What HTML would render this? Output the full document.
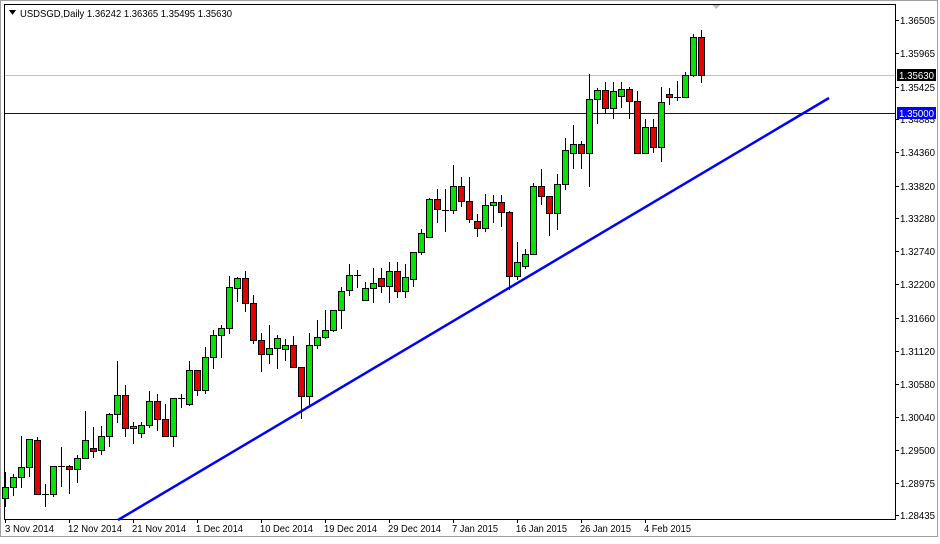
<!DOCTYPE html>
<html><head><meta charset="utf-8"><style>
html,body{margin:0;padding:0;background:#fff;}
body{width:940px;height:539px;overflow:hidden;}
svg text{font-family:"Liberation Sans",sans-serif;font-size:10.5px;fill:#000;}
</style></head><body>
<svg width="940" height="539" xmlns="http://www.w3.org/2000/svg" shape-rendering="crispEdges">
<rect x="0" y="0" width="940" height="539" fill="#fff"/>
<rect x="0.5" y="0.5" width="937" height="536" fill="none" stroke="#a0a0a0"/>
<rect x="4.5" y="4.5" width="891" height="515" fill="none" stroke="#000"/>
<polygon points="9,10 16,10 12.5,15" fill="#000"/>
<text x="20" y="17" textLength="212" lengthAdjust="spacingAndGlyphs">USDSGD,Daily  1.36242 1.36365 1.35495 1.35630</text>
<line x1="5" y1="75.5" x2="895" y2="75.5" stroke="#c0c0c0"/>
<line x1="5" y1="113.5" x2="895" y2="113.5" stroke="#0000c8"/>
<g stroke="#000" stroke-width="1">
<line x1="896" y1="20.5" x2="899" y2="20.5"/><line x1="896" y1="53.5" x2="899" y2="53.5"/>
<line x1="896" y1="87.5" x2="899" y2="87.5"/><line x1="896" y1="119.5" x2="899" y2="119.5"/>
<line x1="896" y1="152.5" x2="899" y2="152.5"/><line x1="896" y1="186.5" x2="899" y2="186.5"/>
<line x1="896" y1="218.5" x2="899" y2="218.5"/><line x1="896" y1="251.5" x2="899" y2="251.5"/>
<line x1="896" y1="284.5" x2="899" y2="284.5"/><line x1="896" y1="318.5" x2="899" y2="318.5"/>
<line x1="896" y1="351.5" x2="899" y2="351.5"/><line x1="896" y1="384.5" x2="899" y2="384.5"/>
<line x1="896" y1="417.5" x2="899" y2="417.5"/><line x1="896" y1="450.5" x2="899" y2="450.5"/>
<line x1="896" y1="483.5" x2="899" y2="483.5"/><line x1="896" y1="515.5" x2="899" y2="515.5"/>
<line x1="5.5" y1="520" x2="5.5" y2="523"/><line x1="69.5" y1="520" x2="69.5" y2="523"/>
<line x1="133.5" y1="520" x2="133.5" y2="523"/><line x1="197.5" y1="520" x2="197.5" y2="523"/>
<line x1="261.5" y1="520" x2="261.5" y2="523"/><line x1="325.5" y1="520" x2="325.5" y2="523"/>
<line x1="389.5" y1="520" x2="389.5" y2="523"/><line x1="453.5" y1="520" x2="453.5" y2="523"/>
<line x1="517.5" y1="520" x2="517.5" y2="523"/><line x1="581.5" y1="520" x2="581.5" y2="523"/>
<line x1="645.5" y1="520" x2="645.5" y2="523"/>
</g>
<g>
<text x="900" y="24" textLength="35" lengthAdjust="spacingAndGlyphs">1.36505</text>
<text x="900" y="57" textLength="35" lengthAdjust="spacingAndGlyphs">1.35965</text>
<text x="900" y="91" textLength="35" lengthAdjust="spacingAndGlyphs">1.35425</text>
<text x="900" y="123" textLength="35" lengthAdjust="spacingAndGlyphs">1.34885</text>
<text x="900" y="156" textLength="35" lengthAdjust="spacingAndGlyphs">1.34360</text>
<text x="900" y="190" textLength="35" lengthAdjust="spacingAndGlyphs">1.33820</text>
<text x="900" y="222" textLength="35" lengthAdjust="spacingAndGlyphs">1.33280</text>
<text x="900" y="255" textLength="35" lengthAdjust="spacingAndGlyphs">1.32740</text>
<text x="900" y="288" textLength="35" lengthAdjust="spacingAndGlyphs">1.32200</text>
<text x="900" y="322" textLength="35" lengthAdjust="spacingAndGlyphs">1.31660</text>
<text x="900" y="355" textLength="35" lengthAdjust="spacingAndGlyphs">1.31120</text>
<text x="900" y="388" textLength="35" lengthAdjust="spacingAndGlyphs">1.30580</text>
<text x="900" y="421" textLength="35" lengthAdjust="spacingAndGlyphs">1.30040</text>
<text x="900" y="454" textLength="35" lengthAdjust="spacingAndGlyphs">1.29500</text>
<text x="900" y="487" textLength="35" lengthAdjust="spacingAndGlyphs">1.28975</text>
<text x="900" y="519" textLength="35" lengthAdjust="spacingAndGlyphs">1.28435</text>
</g>
<rect x="897" y="69" width="39" height="12" fill="#000"/>
<text x="899" y="79" textLength="35" lengthAdjust="spacingAndGlyphs" style="fill:#fff">1.35630</text>
<rect x="897" y="107" width="39" height="12" fill="#0000ff"/>
<text x="899" y="117" textLength="35" lengthAdjust="spacingAndGlyphs" style="fill:#fff">1.35000</text>
<text x="5" y="532" textLength="49" lengthAdjust="spacingAndGlyphs">3 Nov 2014</text>
<text x="68" y="532" textLength="54" lengthAdjust="spacingAndGlyphs">12 Nov 2014</text>
<text x="132" y="532" textLength="54" lengthAdjust="spacingAndGlyphs">21 Nov 2014</text>
<text x="196" y="532" textLength="47" lengthAdjust="spacingAndGlyphs">1 Dec 2014</text>
<text x="260" y="532" textLength="53" lengthAdjust="spacingAndGlyphs">10 Dec 2014</text>
<text x="324" y="532" textLength="53" lengthAdjust="spacingAndGlyphs">19 Dec 2014</text>
<text x="388" y="532" textLength="53" lengthAdjust="spacingAndGlyphs">29 Dec 2014</text>
<text x="452" y="532" textLength="46" lengthAdjust="spacingAndGlyphs">7 Jan 2015</text>
<text x="516" y="532" textLength="51" lengthAdjust="spacingAndGlyphs">16 Jan 2015</text>
<text x="580" y="532" textLength="51" lengthAdjust="spacingAndGlyphs">26 Jan 2015</text>
<text x="644" y="532" textLength="47" lengthAdjust="spacingAndGlyphs">4 Feb 2015</text>
<polygon points="712,5 720,5 716,9" fill="#c0c0c0"/>
<g stroke="#000" stroke-width="1">
<line x1="5.5" y1="472" x2="5.5" y2="507"/><rect x="2.5" y="487.5" width="6" height="11" fill="#00e600"/>
<line x1="13.5" y1="474" x2="13.5" y2="496"/><rect x="10.5" y="477.5" width="6" height="10" fill="#00e600"/>
<line x1="21.5" y1="436" x2="21.5" y2="488"/><rect x="18.5" y="467.5" width="6" height="10" fill="#00e600"/>
<line x1="29.5" y1="439" x2="29.5" y2="477"/><rect x="26.5" y="439.5" width="6" height="28" fill="#00e600"/>
<line x1="37.5" y1="437" x2="37.5" y2="494"/><rect x="34.5" y="440.5" width="6" height="54" fill="#e60000"/>
<line x1="45.5" y1="484" x2="45.5" y2="507"/><line x1="42" y1="494.5" x2="49" y2="494.5"/>
<line x1="53.5" y1="466" x2="53.5" y2="497"/><rect x="50.5" y="466.5" width="6" height="28" fill="#00e600"/>
<line x1="61.5" y1="447" x2="61.5" y2="487"/><line x1="58" y1="466.5" x2="65" y2="466.5"/>
<line x1="69.5" y1="465" x2="69.5" y2="494"/><rect x="66.5" y="466.5" width="6" height="3" fill="#e60000"/>
<line x1="77.5" y1="455" x2="77.5" y2="483"/><rect x="74.5" y="458.5" width="6" height="11" fill="#00e600"/>
<line x1="85.5" y1="411" x2="85.5" y2="459"/><rect x="82.5" y="440.5" width="6" height="18" fill="#00e600"/>
<line x1="93.5" y1="427" x2="93.5" y2="458"/><rect x="90.5" y="448.5" width="6" height="3" fill="#e60000"/>
<line x1="101.5" y1="426" x2="101.5" y2="455"/><rect x="98.5" y="436.5" width="6" height="14" fill="#00e600"/>
<line x1="109.5" y1="413" x2="109.5" y2="447"/><rect x="106.5" y="414.5" width="6" height="22" fill="#00e600"/>
<line x1="117.5" y1="361" x2="117.5" y2="423"/><rect x="114.5" y="395.5" width="6" height="19" fill="#00e600"/>
<line x1="125.5" y1="385" x2="125.5" y2="437"/><rect x="122.5" y="395.5" width="6" height="33" fill="#e60000"/>
<line x1="133.5" y1="422" x2="133.5" y2="444"/><rect x="130.5" y="426.5" width="6" height="2" fill="#00e600"/>
<line x1="141.5" y1="422" x2="141.5" y2="438"/><rect x="138.5" y="425.5" width="6" height="8" fill="#00e600"/>
<line x1="149.5" y1="391" x2="149.5" y2="428"/><rect x="146.5" y="401.5" width="6" height="24" fill="#00e600"/>
<line x1="157.5" y1="394" x2="157.5" y2="431"/><rect x="154.5" y="401.5" width="6" height="18" fill="#e60000"/>
<line x1="165.5" y1="404" x2="165.5" y2="437"/><rect x="162.5" y="419.5" width="6" height="17" fill="#e60000"/>
<line x1="173.5" y1="398" x2="173.5" y2="447"/><rect x="170.5" y="398.5" width="6" height="38" fill="#00e600"/>
<line x1="181.5" y1="394" x2="181.5" y2="408"/><line x1="178" y1="398.5" x2="185" y2="398.5"/>
<line x1="189.5" y1="361" x2="189.5" y2="406"/><rect x="186.5" y="370.5" width="6" height="34" fill="#00e600"/>
<line x1="197.5" y1="370" x2="197.5" y2="396"/><rect x="194.5" y="370.5" width="6" height="20" fill="#e60000"/>
<line x1="205.5" y1="347" x2="205.5" y2="394"/><rect x="202.5" y="357.5" width="6" height="33" fill="#00e600"/>
<line x1="213.5" y1="330" x2="213.5" y2="369"/><rect x="210.5" y="335.5" width="6" height="22" fill="#00e600"/>
<line x1="221.5" y1="325" x2="221.5" y2="358"/><rect x="218.5" y="328.5" width="6" height="7" fill="#00e600"/>
<line x1="229.5" y1="276" x2="229.5" y2="334"/><rect x="226.5" y="287.5" width="6" height="41" fill="#00e600"/>
<line x1="237.5" y1="277" x2="237.5" y2="302"/><rect x="234.5" y="278.5" width="6" height="10" fill="#00e600"/>
<line x1="245.5" y1="271" x2="245.5" y2="312"/><rect x="242.5" y="278.5" width="6" height="25" fill="#e60000"/>
<line x1="253.5" y1="295" x2="253.5" y2="344"/><rect x="250.5" y="303.5" width="6" height="37" fill="#e60000"/>
<line x1="261.5" y1="333" x2="261.5" y2="372"/><rect x="258.5" y="340.5" width="6" height="14" fill="#e60000"/>
<line x1="269.5" y1="325" x2="269.5" y2="364"/><rect x="266.5" y="348.5" width="6" height="6" fill="#00e600"/>
<line x1="277.5" y1="335" x2="277.5" y2="369"/><rect x="274.5" y="338.5" width="6" height="10" fill="#00e600"/>
<line x1="285.5" y1="339" x2="285.5" y2="361"/><rect x="282.5" y="345.5" width="6" height="4" fill="#00e600"/>
<line x1="293.5" y1="336" x2="293.5" y2="367"/><rect x="290.5" y="345.5" width="6" height="22" fill="#e60000"/>
<line x1="301.5" y1="367" x2="301.5" y2="419"/><rect x="298.5" y="367.5" width="6" height="29" fill="#e60000"/>
<line x1="309.5" y1="333" x2="309.5" y2="405"/><rect x="306.5" y="345.5" width="6" height="51" fill="#00e600"/>
<line x1="317.5" y1="320" x2="317.5" y2="349"/><rect x="314.5" y="337.5" width="6" height="8" fill="#00e600"/>
<line x1="325.5" y1="310" x2="325.5" y2="339"/><rect x="322.5" y="330.5" width="6" height="7" fill="#00e600"/>
<line x1="333.5" y1="310" x2="333.5" y2="332"/><rect x="330.5" y="310.5" width="6" height="20" fill="#00e600"/>
<line x1="341.5" y1="287" x2="341.5" y2="329"/><rect x="338.5" y="291.5" width="6" height="19" fill="#00e600"/>
<line x1="349.5" y1="264" x2="349.5" y2="296"/><rect x="346.5" y="275.5" width="6" height="15" fill="#00e600"/>
<line x1="357.5" y1="270" x2="357.5" y2="288"/><line x1="354" y1="275.5" x2="361" y2="275.5"/>
<line x1="365.5" y1="282" x2="365.5" y2="301"/><rect x="362.5" y="288.5" width="6" height="12" fill="#00e600"/>
<line x1="373.5" y1="268" x2="373.5" y2="303"/><rect x="370.5" y="283.5" width="6" height="5" fill="#00e600"/>
<line x1="381.5" y1="268" x2="381.5" y2="293"/><rect x="378.5" y="278.5" width="6" height="8" fill="#e60000"/>
<line x1="389.5" y1="262" x2="389.5" y2="303"/><rect x="386.5" y="271.5" width="6" height="15" fill="#00e600"/>
<line x1="397.5" y1="262" x2="397.5" y2="298"/><rect x="394.5" y="271.5" width="6" height="20" fill="#e60000"/>
<line x1="405.5" y1="264" x2="405.5" y2="298"/><rect x="402.5" y="277.5" width="6" height="14" fill="#00e600"/>
<line x1="413.5" y1="252" x2="413.5" y2="287"/><rect x="410.5" y="252.5" width="6" height="27" fill="#00e600"/>
<line x1="421.5" y1="229" x2="421.5" y2="255"/><rect x="418.5" y="233.5" width="6" height="19" fill="#00e600"/>
<line x1="429.5" y1="198" x2="429.5" y2="237"/><rect x="426.5" y="199.5" width="6" height="38" fill="#00e600"/>
<line x1="437.5" y1="189" x2="437.5" y2="223"/><rect x="434.5" y="199.5" width="6" height="10" fill="#e60000"/>
<line x1="445.5" y1="189" x2="445.5" y2="232"/><line x1="442" y1="210.5" x2="449" y2="210.5"/>
<line x1="453.5" y1="165" x2="453.5" y2="214"/><rect x="450.5" y="186.5" width="6" height="24" fill="#00e600"/>
<line x1="461.5" y1="177" x2="461.5" y2="207"/><rect x="458.5" y="186.5" width="6" height="15" fill="#e60000"/>
<line x1="469.5" y1="177" x2="469.5" y2="223"/><rect x="466.5" y="201.5" width="6" height="18" fill="#e60000"/>
<line x1="477.5" y1="214" x2="477.5" y2="237"/><rect x="474.5" y="221.5" width="6" height="7" fill="#e60000"/>
<line x1="485.5" y1="194" x2="485.5" y2="232"/><rect x="482.5" y="205.5" width="6" height="23" fill="#00e600"/>
<line x1="493.5" y1="195" x2="493.5" y2="223"/><rect x="490.5" y="202.5" width="6" height="3" fill="#00e600"/>
<line x1="501.5" y1="195" x2="501.5" y2="227"/><rect x="498.5" y="202.5" width="6" height="10" fill="#e60000"/>
<line x1="509.5" y1="211" x2="509.5" y2="290"/><rect x="506.5" y="212.5" width="6" height="64" fill="#e60000"/>
<line x1="517.5" y1="242" x2="517.5" y2="280"/><rect x="514.5" y="262.5" width="6" height="14" fill="#00e600"/>
<line x1="525.5" y1="249" x2="525.5" y2="269"/><rect x="522.5" y="254.5" width="6" height="12" fill="#00e600"/>
<line x1="533.5" y1="183" x2="533.5" y2="254"/><rect x="530.5" y="186.5" width="6" height="68" fill="#00e600"/>
<line x1="541.5" y1="169" x2="541.5" y2="205"/><rect x="538.5" y="186.5" width="6" height="10" fill="#e60000"/>
<line x1="549.5" y1="196" x2="549.5" y2="236"/><rect x="546.5" y="196.5" width="6" height="17" fill="#e60000"/>
<line x1="557.5" y1="174" x2="557.5" y2="230"/><rect x="554.5" y="184.5" width="6" height="29" fill="#00e600"/>
<line x1="565.5" y1="138" x2="565.5" y2="190"/><rect x="562.5" y="150.5" width="6" height="34" fill="#00e600"/>
<line x1="573.5" y1="125" x2="573.5" y2="169"/><rect x="570.5" y="144.5" width="6" height="9" fill="#00e600"/>
<line x1="581.5" y1="141" x2="581.5" y2="169"/><rect x="578.5" y="144.5" width="6" height="9" fill="#e60000"/>
<line x1="589.5" y1="74" x2="589.5" y2="187"/><rect x="586.5" y="99.5" width="6" height="54" fill="#00e600"/>
<line x1="597.5" y1="88" x2="597.5" y2="124"/><rect x="594.5" y="90.5" width="6" height="9" fill="#00e600"/>
<line x1="605.5" y1="82" x2="605.5" y2="114"/><rect x="602.5" y="90.5" width="6" height="18" fill="#e60000"/>
<line x1="613.5" y1="82" x2="613.5" y2="119"/><rect x="610.5" y="91.5" width="6" height="17" fill="#00e600"/>
<line x1="621.5" y1="82" x2="621.5" y2="108"/><rect x="618.5" y="89.5" width="6" height="7" fill="#00e600"/>
<line x1="629.5" y1="87" x2="629.5" y2="119"/><rect x="626.5" y="89.5" width="6" height="12" fill="#e60000"/>
<line x1="637.5" y1="91" x2="637.5" y2="154"/><rect x="634.5" y="101.5" width="6" height="52" fill="#e60000"/>
<line x1="645.5" y1="119" x2="645.5" y2="154"/><rect x="642.5" y="127.5" width="6" height="26" fill="#00e600"/>
<line x1="653.5" y1="119" x2="653.5" y2="153"/><rect x="650.5" y="127.5" width="6" height="20" fill="#e60000"/>
<line x1="661.5" y1="87" x2="661.5" y2="162"/><rect x="658.5" y="102.5" width="6" height="45" fill="#00e600"/>
<line x1="669.5" y1="88" x2="669.5" y2="105"/><rect x="666.5" y="94.5" width="6" height="3" fill="#e60000"/>
<line x1="677.5" y1="81" x2="677.5" y2="101"/><line x1="674" y1="97.5" x2="681" y2="97.5"/>
<line x1="685.5" y1="72" x2="685.5" y2="97"/><rect x="682.5" y="75.5" width="6" height="22" fill="#00e600"/>
<line x1="693.5" y1="34" x2="693.5" y2="77"/><rect x="690.5" y="37.5" width="6" height="38" fill="#00e600"/>
<line x1="701.5" y1="30" x2="701.5" y2="83"/><rect x="698.5" y="37.5" width="6" height="38" fill="#e60000"/>
</g>
<line x1="118" y1="520" x2="829" y2="98" stroke="#0000ff" stroke-width="2.5" shape-rendering="auto"/>
</svg>
</body></html>
